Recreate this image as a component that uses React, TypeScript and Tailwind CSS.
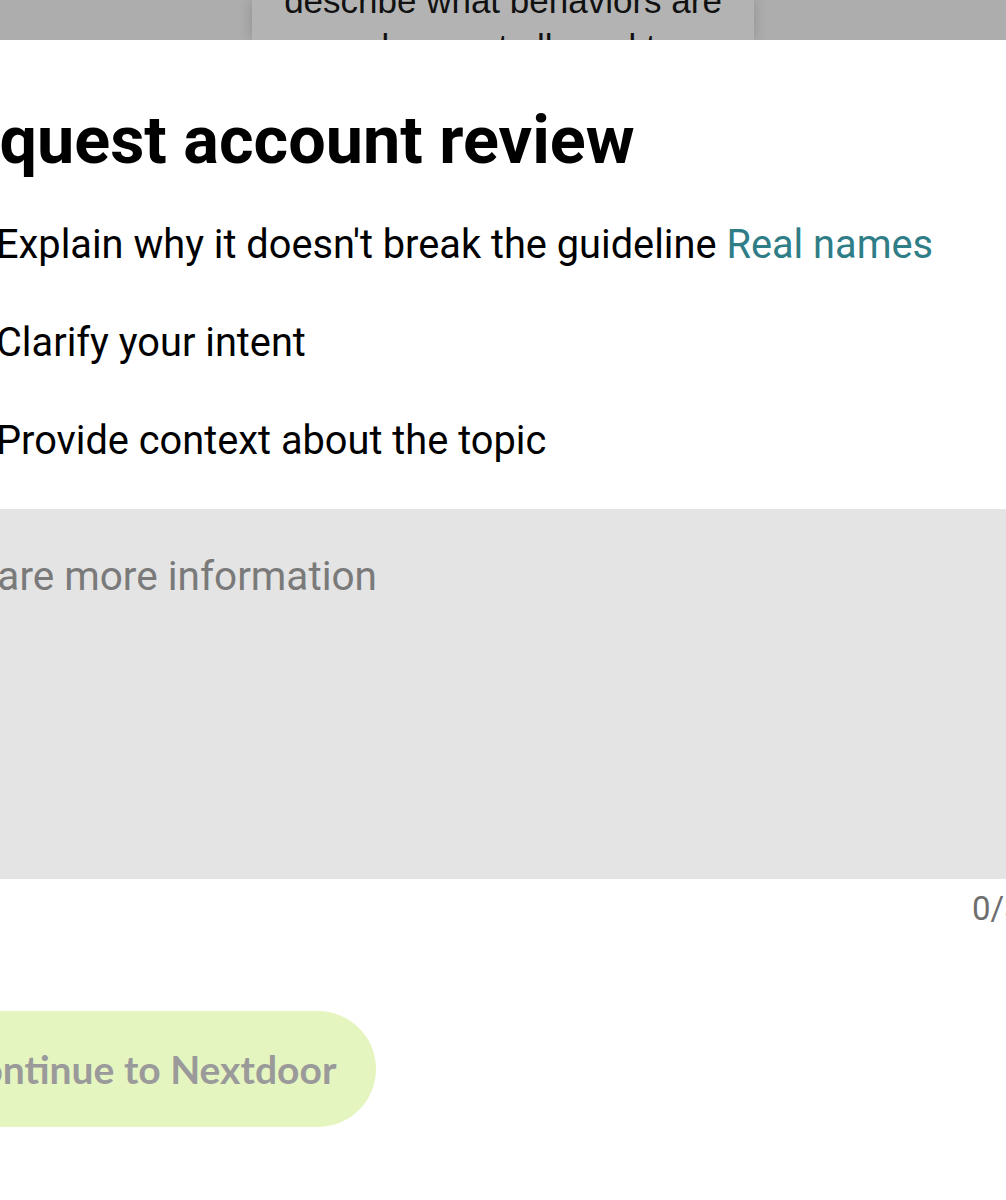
import React from 'react';

const roboto = { fontFamily: 'Roboto, "Noto Sans", sans-serif' };

export default function App() {
  return (
    <div className="w-[1006px] h-[1200px] overflow-hidden bg-white">
      {/* Dimmed backdrop with the page underneath */}
      <div className="h-[40px] bg-[#adadad] flex justify-center overflow-hidden">
        <div className="w-[502px] h-full bg-[#b3b3b3] shadow-[0_0_14px_rgba(0,0,0,0.18)] overflow-hidden">
          <p className="-mt-[22px] text-center text-[35px] leading-[46px] text-[#111] font-['Liberation_Sans',Arial,sans-serif]">
            describe what behaviors are
            <br />
            and are not allowed to
          </p>
        </div>
      </div>

      {/* Bottom sheet */}
      <div className="pt-[62px] text-black" style={roboto}>
        <h1 className="-ml-[79px] whitespace-nowrap text-[66.5px] leading-[76px] font-bold">
          Request account review
        </h1>

        <div className="mt-[18px] -ml-[4px] text-[39.75px] leading-[98px] whitespace-nowrap">
          <p>
            Explain why it doesn't break the guideline{' '}
            <span className="text-[#2f7d86]">Real names</span>
          </p>
          <p>Clarify your intent</p>
          <p>Provide context about the topic</p>
        </div>

        <div className="mt-[19px] -ml-[80px] w-[1200px] h-[370px] bg-[#e4e4e4] pt-[36px] pl-[31px]">
          <p className="text-[40.5px] leading-[63px] text-[#7a7a7a] whitespace-nowrap">Share more information</p>
        </div>

        <div className="pl-[972px] pt-[8px] text-[33px] leading-[44px] text-[#6e6e6e] whitespace-nowrap">0/3000</div>

        <div className="mt-[80px] flex">
          <div className="-ml-[84px] h-[116px] flex items-center rounded-full bg-[#e5f5c0] pl-[39px] pr-[40px]">
            <span className="text-[39px] font-bold text-[#9a9a9b] whitespace-nowrap font-['Lato',sans-serif]">
              Continue to Nextdoor
            </span>
          </div>
        </div>
      </div>
    </div>
  );
}
